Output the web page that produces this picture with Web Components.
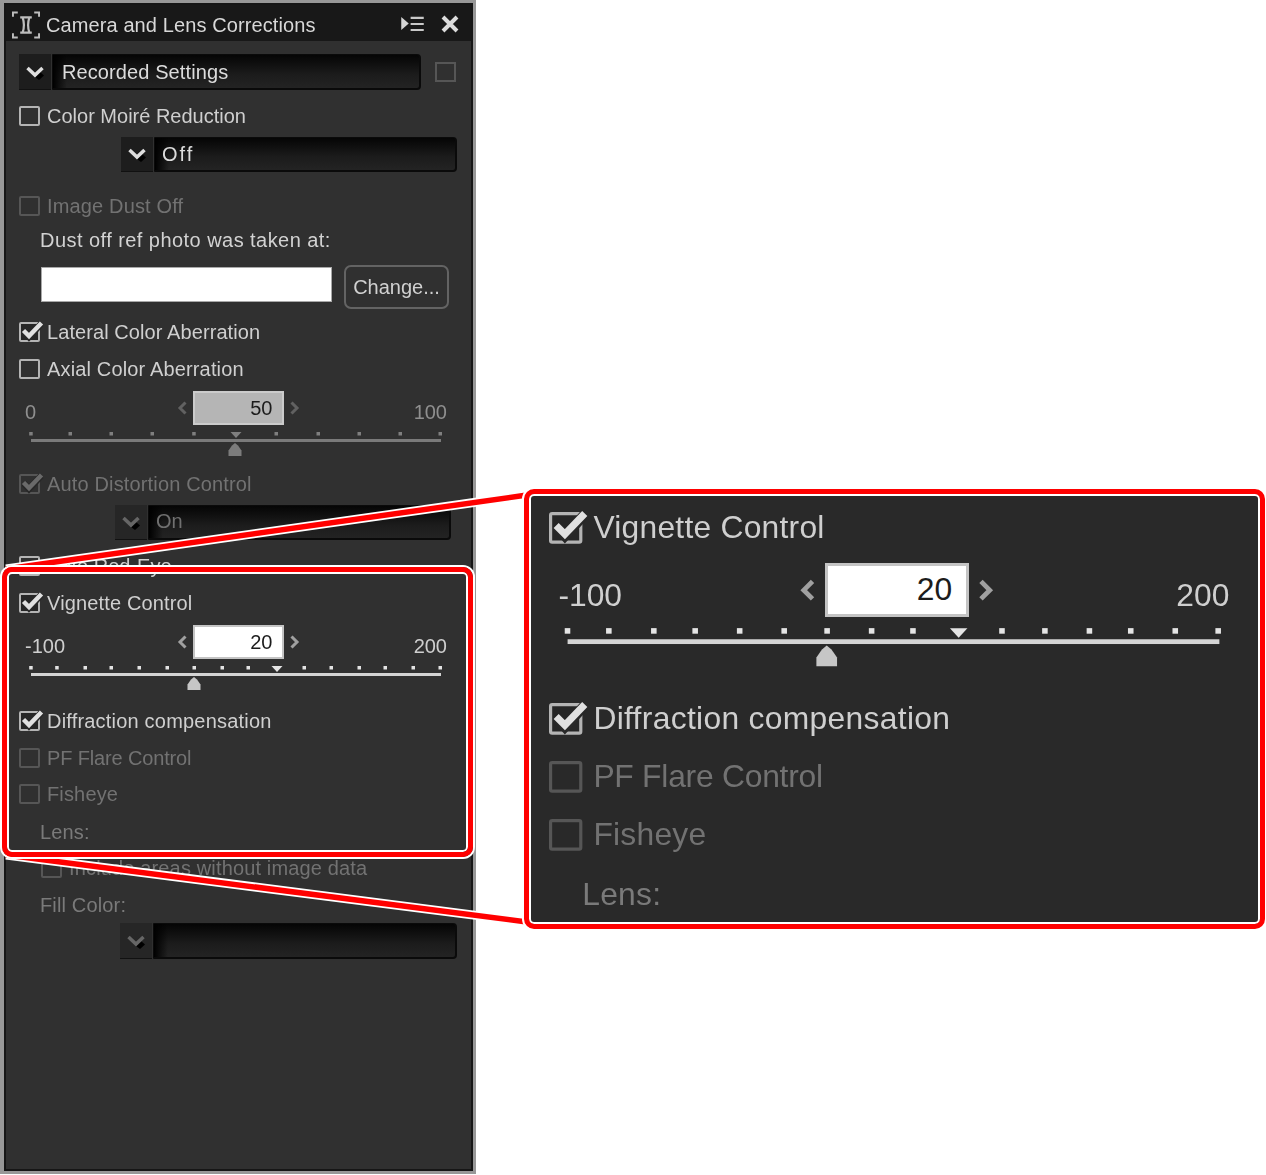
<!DOCTYPE html>
<html><head><meta charset="utf-8"><title>Camera and Lens Corrections</title>
<style>html,body{margin:0;padding:0;background:#fff}</style></head><body>
<nx-page>
  <nx-panel title="Camera and Lens Corrections">
    <nx-row style="margin-top:13px;gap:14px;align-items:center">
      <nx-select style="width:402px;letter-spacing:.1px">Recorded Settings</nx-select><nx-box></nx-box>
    </nx-row>
    <nx-check style="margin-top:16px;letter-spacing:0">Color Moiré Reduction</nx-check>
    <nx-select style="margin:11px 0 0 102px;width:336px;height:35px;letter-spacing:2px;--pad:7px">Off</nx-select>
    <nx-check dim style="margin-top:24px">Image Dust Off</nx-check>
    <nx-text style="margin:14px 0 0 21px;letter-spacing:.45px">Dust off ref photo was taken at:</nx-text>
    <nx-row style="margin:15px 0 0 22px;gap:12px;height:44px">
      <nx-input></nx-input><nx-button>Change...</nx-button>
    </nx-row>
    <nx-check checked style="margin-top:13px;letter-spacing:.08px">Lateral Color Aberration</nx-check>
    <nx-check style="margin-top:17px">Axial Color Aberration</nx-check>
    <nx-slider dim min="0" max="100" value="50" ticks="30.7,70,111,152,193.7,276,318,359,400,440" marker="236" thumb="235" style="margin-top:12px"></nx-slider>
    <nx-check dim checked style="margin-top:18px">Auto Distortion Control</nx-check>
    <nx-select dim style="margin:11px 0 0 96px;width:336px;height:35px;letter-spacing:0;--pad:7px;--up:2px">On</nx-select>
    <nx-check style="margin-top:16px;letter-spacing:0">Auto Red-Eye</nx-check>
    <nx-group style="margin-top:17px"></nx-group>
    <nx-check dim style="margin:16px 0 0 22px">Include areas without image data</nx-check>
    <nx-text dim style="margin:17px 0 0 21px">Fill Color:</nx-text>
    <nx-select dim style="margin:8px 0 0 101px;width:337px"></nx-select>
  </nx-panel>
  <nx-lines></nx-lines>
  <nx-callout style="left:2px;top:567px;width:471px;height:290px"></nx-callout>
  <nx-callout solid style="left:524px;top:489px;width:741px;height:440px;--bg:#292929">
    <nx-group style="zoom:1.59;margin:11.2px 0 0 12.5px;--d:23px"></nx-group>
  </nx-callout>
</nx-page>
<script>
function def(name, html, extra){
  customElements.define(name, class extends HTMLElement{
    constructor(){super();this.attachShadow({mode:'open'}).innerHTML=typeof html==='function'?html(this):html;}
    connectedCallback(){ if(extra) extra.call(this,this.shadowRoot); }
  });
}
def('nx-page',`<style>:host{display:block;position:relative;width:1266px;height:1175px;overflow:hidden;background:#fff;
font:20px/20px "Liberation Sans",Arial,sans-serif;letter-spacing:.15px}</style><slot></slot>`);
def('nx-row',`<style>:host{display:flex}</style><slot></slot>`);
def('nx-panel',`<style>
:host{display:block;width:476px;height:1174px;box-sizing:border-box;background:#989898;padding:3px 3px 3px 4px}
.in{height:100%;box-sizing:border-box;border:2px solid #161616;background:#303030;display:flex;flex-direction:column;filter:blur(.5px)}
.bar{height:36px;flex:none;background:#181818;display:flex;align-items:center;color:#d8d8d8;letter-spacing:.1px;padding:3px 12px 0 6px;box-sizing:border-box}
.bar span{margin-left:6px;flex:1}
.body{padding-left:13px;display:flex;flex-direction:column;align-items:flex-start}
svg{display:block;overflow:visible}
</style><div class="in"><div class="bar">
<svg width="28" height="28" viewBox="0 0 29 29" fill="none" stroke="#bdbdbd" stroke-width="2">
<path d="M1 6V1.5H6M23 1.5H28V6M1 23V27.5H6M23 27.5H28V23"/>
<path d="M8.5 6.5H20.500M8.500 22.500H20.500M11 6.500C12.500 11 12.500 18 11 22.500M18 6.500C16.500 11 16.500 18 18 22.500" stroke-width="2.300"/></svg>
<span id="t"></span>
<svg width="23" height="15" viewBox="0 0 24 16" style="margin:-2px 17px 0 0"><path d="M0 1L8 8L0 15Z" fill="#d5d5d5"/><path d="M10 2H24M10 8.500H24M10 15H24" stroke="#c8c8c8" stroke-width="2.200"/></svg>
<svg width="18" height="18" viewBox="0 0 18 18" style="margin:-2px 0 0 0"><path d="M2 2L16 16M16 2L2 16" stroke="#dcdcdc" stroke-width="4"/></svg>
</div><div class="body"><slot></slot></div></div>`,function(s){s.getElementById('t').textContent=this.getAttribute('title')});
function checkSvg(h){const c=h.hasAttribute('checked'),d=h.hasAttribute('dim');
 const b=d?'#565656':'#b4b4b4',m=d?'#6a6a6a':'#e0e0e0';
 return `<svg width="21" height="20" viewBox="0 0 21 20" style="overflow:visible;flex:none"><rect x="1" y="1" width="19" height="18" rx="1" fill="${c&&!d?'#262626':'none'}" stroke="${b}" stroke-width="2"/>${c?`<path d="M5 9.500L10 15L22 2" fill="none" stroke="#282828" stroke-width="6.500"/><path d="M4.500 8.500L10 14L22.500 1" fill="none" stroke="${m}" stroke-width="4.500"/>`:''}</svg>`;}
def('nx-check',h=>`<style>:host{display:flex;align-items:center;height:20px;gap:7px;color:${h.hasAttribute('dim')?'#727272':'#cfcfcf'};white-space:nowrap}</style>${checkSvg(h)}<slot></slot>`);
def('nx-text',h=>`<style>:host{display:block;height:20px;color:${h.hasAttribute('dim')?'#7a7a7a':'#d2d2d2'};white-space:nowrap}</style><slot></slot>`);
def('nx-box',`<style>:host{display:block;width:21px;height:20px;box-sizing:border-box;border:2px solid #565656;flex:none}</style>`);
def('nx-select',h=>{const d=h.hasAttribute('dim');return `<style>
:host{display:flex;height:36px;box-sizing:border-box;color:${d?'#707070':'#dcdcdc'}}
.c{width:32px;flex:none;background:${d?'#262626':'#1d1d1d'};border-bottom:1px solid #111;display:flex;align-items:center;justify-content:center;box-sizing:border-box}
.f{flex:1;border-radius:1px 4px 4px 1px;border:1px solid #0a0a0a;border-width:1px 2px 2px 1px;margin-left:1px;display:flex;align-items:center;padding:0 0 var(--up,0) var(--pad,9px);
background:linear-gradient(to right,#000,transparent 14px),linear-gradient(#050505,#1c1c1c 60%,#232323)}
svg{overflow:visible;display:block}</style>
<div class="c"><svg width="20" height="14" viewBox="0 0 20 14"><path d="M10 12L15 7L19 10.500L14 15Z" fill="#000"/><path d="M2.500 3L10 10L17.500 3" fill="none" stroke="${d?'#666':'#dedede'}" stroke-width="3.500"/></svg></div>
<div class="f"><slot></slot></div>`});
def('nx-input',`<style>:host{display:block;width:291px;height:35px;margin-top:2px;box-sizing:border-box;background:#fff;border:1px solid #a8a8a8}</style>`);
def('nx-button',`<style>:host{display:flex;align-items:center;justify-content:center;width:105px;height:44px;box-sizing:border-box;border:2px solid #636363;border-radius:7px;color:#d0d0d0;letter-spacing:0}</style><slot></slot>`);
def('nx-slider',h=>{const d=h.hasAttribute('dim'),x=v=>+v-25;
 const ticks=h.getAttribute('ticks').split(',').map(v=>`<rect x="${x(v)-1.500}" y="7" width="3.500" height="3.500"/>`).join('');
 const m=x(h.getAttribute('marker')),t=x(h.getAttribute('thumb'));
 const tc=d?'#7f7f7f':'#e4e4e4',tr=d?'#7a7a7a':'#d4d4d4',th=d?'#7c7c7c':'#c6c6c6',ac=d?'#616161':'#a0a0a0';
 return `<style>
:host{display:block;width:422px;margin-left:6px;color:${d?'#8f8f8f':'#cfcfcf'};letter-spacing:0}
.top{display:grid;grid-template-columns:1fr auto 1fr;height:34px}
.l{align-self:end;margin-bottom:3px}.r{align-self:end;margin-bottom:3px;text-align:right}
.s{display:flex;align-items:center;gap:5px;margin-left:4px}
.v{width:91px;height:34px;box-sizing:border-box;background:${d?'#b5b5b5':'#fff'};border:2px solid ${d?'#cbcbcb':'#c4c4c4'};color:#1c1c1c;text-align:right;padding:5px 9px 0 0;line-height:20px}
svg{display:block;overflow:visible}</style>
<div class="top"><span class="l">${h.getAttribute('min')}</span>
<div class="s"><svg width="11" height="14" viewBox="0 0 11 14"><path d="M8.500 1.500L3 7L8.500 12.500" fill="none" stroke="${ac}" stroke-width="3"/></svg><div class="v">${h.getAttribute('value')}</div><svg width="11" height="14" viewBox="0 0 11 14"><path d="M2.500 1.500L8 7L2.500 12.500" fill="none" stroke="${ac}" stroke-width="3"/></svg></div>
<span class="r">${h.getAttribute('max')}</span></div>
<svg width="422" height="31" viewBox="0 0 422 31"><g fill="${tc}">${ticks}<path d="M${m-5.500} 7H${m+5.500}L${m} 13Z"/></g>
<rect x="6" y="14" width="410" height="3" fill="${tr}"/>
<path d="M${t} 18L${t+3} 20.500L${t+6.500} 25.500V31H${t-6.500}V25.500L${t-3} 20.500Z" fill="${th}"/></svg>`});
def('nx-group',`<style>:host{display:flex;flex-direction:column;align-items:flex-start}</style>
<nx-check checked>Vignette Control</nx-check>
<nx-slider min="-100" max="200" value="20" ticks="30.700,56.700,85,111,139,167,194,222,248,304,331,359,385,413,440" marker="277" thumb="194" style="margin-top:12px"></nx-slider>
<nx-check checked style="margin-top:var(--d,21px);letter-spacing:.2px">Diffraction compensation</nx-check>
<nx-check dim style="margin-top:17px;letter-spacing:-.15px">PF Flare Control</nx-check>
<nx-check dim style="margin-top:16px">Fisheye</nx-check>
<nx-text dim style="margin:18px 0 0 21px">Lens:</nx-text>`);
def('nx-lines',`<style>:host{position:absolute;left:0;top:0}svg{display:block}</style>
<svg width="1266" height="1175" viewBox="0 0 1266 1175" fill="none">
<g stroke="#fff" stroke-width="9"><path d="M6 569L527 495M6 855L527 922"/></g>
<g stroke="#f00" stroke-width="5.500"><path d="M6 569L527 495M6 855L527 922"/></g></svg>`);
def('nx-callout',h=>`<style>:host{position:absolute;box-sizing:border-box;border:5.500px solid #f00;border-radius:10px;
box-shadow:0 0 0 2px #fff,inset 0 0 0 2px #fff;display:block;${h.hasAttribute('solid')?'background:var(--bg) padding-box':''}}
.c{filter:blur(.7px)}</style><div class="c"><slot></slot></div>`);
</script>
</body></html>
